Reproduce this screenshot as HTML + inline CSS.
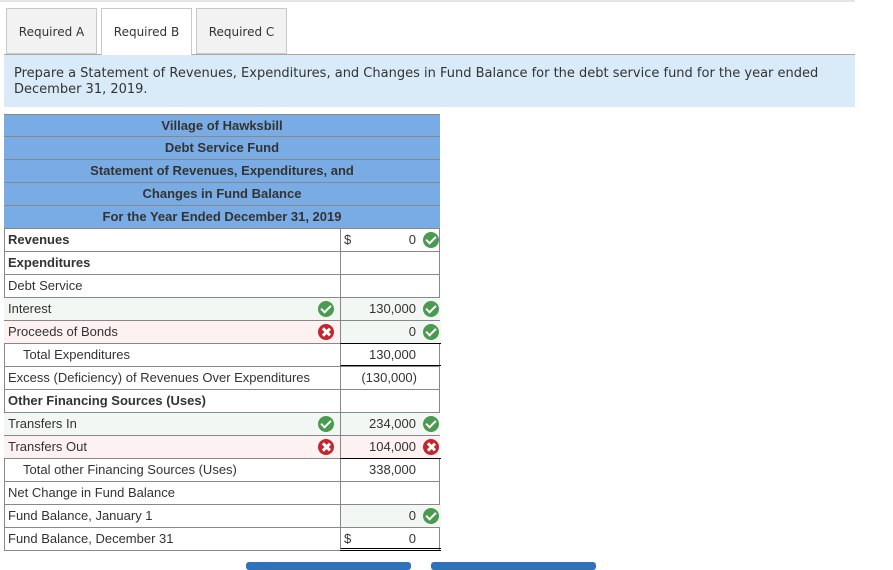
<!DOCTYPE html><html><head><style>
body{margin:0;width:893px;height:568px;overflow:hidden;background:#fff;font-family:"Liberation Sans",Arial,sans-serif;position:relative}
.a{position:absolute}
.tab{position:absolute;top:8px;height:46px;width:91px;border:1px solid #c8c8c8;background:#f2f2f2;font-family:"DejaVu Sans",sans-serif;font-size:12px;color:#333;text-align:center;line-height:46px;box-sizing:border-box}
.r{position:absolute;left:4px;width:436px;height:23px;border-bottom:1px solid #888;box-sizing:border-box;font-size:13px;color:#333}
.h{background:#79ace4;text-align:center;font-weight:bold;line-height:22px;color:#333}
.l{position:absolute;left:4px;top:0;line-height:22px}
.c2{position:absolute;left:336px;top:0;width:100px;height:22px;border-left:1px solid #888}
.v{position:absolute;right:25px;line-height:22px}
.d{position:absolute;left:3px;line-height:22px}
.ic{position:absolute;width:16px;height:16px;border-radius:50%;top:3px}
.ok{background:#4a9a4f}.no{background:#c4262e}
.ok:after{content:"";position:absolute;left:5px;top:2px;width:4px;height:8px;border:solid #fff;border-width:0 2.5px 2.5px 0;transform:rotate(45deg)}
.no:before,.no:after{content:"";position:absolute;left:7px;top:3px;width:2.5px;height:10px;background:#fff;transform:rotate(45deg)}
.no:after{transform:rotate(-45deg)}
.g{background:#f3f7f3}.p{background:#fdf1f1}
</style></head><body>
<div class="a" style="left:0;top:0;width:855px;height:2px;background:#e5e5e5"></div>
<div class="a" style="left:4px;top:54px;width:851px;height:1px;background:#aaa"></div>
<div class="tab" style="left:6px">Required A</div>
<div class="tab" style="left:101px;background:#fff;border-bottom-color:#fff;height:48px">Required B</div>
<div class="tab" style="left:196px">Required C</div>
<div class="a" style="left:4px;top:55px;width:851px;height:52px;background:#d9ebf9"></div>
<div class="a" style="left:14px;top:66px;font-family:'DejaVu Sans',sans-serif;font-size:13px;color:#333;line-height:16px">Prepare a Statement of Revenues, Expenditures, and Changes in Fund Balance for the debt service fund for the year ended<br>December 31, 2019.</div>
<div class="a" style="left:4px;top:114px;width:436px;height:437px;border:1px solid #888;box-sizing:border-box;border-bottom:none"></div>
<div class="r h" style="top:114px;border-top:1px solid #888">Village of Hawksbill</div>
<div class="r h" style="top:137px">Debt Service Fund</div>
<div class="r h" style="top:160px">Statement of Revenues, Expenditures, and</div>
<div class="r h" style="top:183px">Changes in Fund Balance</div>
<div class="r h" style="top:206px">For the Year Ended December 31, 2019</div>

<div class="r" style="top:229px"><span class="l" style="font-weight:bold">Revenues</span><div class="c2"><span class="d">$</span><span class="v">0</span><i class="ic ok" style="left:82px"></i></div></div>
<div class="r" style="top:252px"><span class="l" style="font-weight:bold">Expenditures</span><div class="c2"></div></div>
<div class="r" style="top:275px"><span class="l">Debt Service</span><div class="c2"></div></div>
<div class="r g" style="top:298px"><span class="l">Interest</span><i class="ic ok" style="left:314px"></i><div class="c2"><span class="v">130,000</span><i class="ic ok" style="left:82px"></i></div></div>
<div class="r p" style="top:321px"><span class="l">Proceeds of Bonds</span><i class="ic no" style="left:314px"></i><div class="c2 g" style="border-bottom:1px solid #000"><span class="v">0</span><i class="ic ok" style="left:82px"></i></div></div>
<div class="r" style="top:344px"><span class="l" style="left:19px">Total Expenditures</span><div class="c2" style="border-bottom:1px solid #000;height:21px"><span class="v">130,000</span></div></div>
<div class="r" style="top:367px"><span class="l">Excess (Deficiency) of Revenues Over Expenditures</span><div class="c2"><span class="v" style="right:24px">(130,000)</span></div></div>
<div class="r" style="top:390px"><span class="l" style="font-weight:bold">Other Financing Sources (Uses)</span><div class="c2"></div></div>
<div class="r g" style="top:413px"><span class="l">Transfers In</span><i class="ic ok" style="left:314px"></i><div class="c2"><span class="v">234,000</span><i class="ic ok" style="left:82px"></i></div></div>
<div class="r p" style="top:436px"><span class="l">Transfers Out</span><i class="ic no" style="left:314px"></i><div class="c2" style="border-bottom:1px solid #000"><span class="v">104,000</span><i class="ic no" style="left:82px"></i></div></div>
<div class="r" style="top:459px"><span class="l" style="left:19px">Total other Financing Sources (Uses)</span><div class="c2"><span class="v">338,000</span></div></div>
<div class="r" style="top:482px"><span class="l">Net Change in Fund Balance</span><div class="c2"></div></div>
<div class="r" style="top:505px"><span class="l">Fund Balance, January 1</span><div class="c2 g"><span class="v">0</span><i class="ic ok" style="left:82px"></i></div></div>
<div class="r" style="top:528px;border-bottom:1px solid #888"><span class="l">Fund Balance, December 31</span><div class="c2" style="border-bottom:3px double #000;height:20px"><span class="d">$</span><span class="v">0</span></div></div>
<div class="a" style="left:246px;top:562px;width:165px;height:8px;background:#2f72bb;border-radius:3px"></div>
<div class="a" style="left:431px;top:562px;width:165px;height:8px;background:#2f72bb;border-radius:3px"></div>
</body></html>
